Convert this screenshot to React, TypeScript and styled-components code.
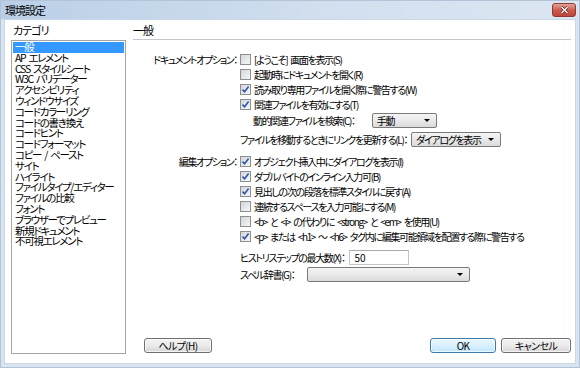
import React from 'react';
import styled, { createGlobalStyle } from 'styled-components';

const GlobalStyle = createGlobalStyle`
  html, body {
    margin: 0;
    padding: 0;
    background: #fff;
  }
  body {
    font-family: "Noto Sans CJK JP", "Liberation Sans", sans-serif;
    font-size: 10px;
    font-feature-settings: "palt";
    letter-spacing: -1.35px;
    word-spacing: 2px;
    color: #000;
  }
`;

const Window = styled.div`
  width: 580px;
  height: 368px;
  box-sizing: border-box;
  display: flex;
  flex-direction: column;
  background: #d9e4f1;
  border: 1px solid #b4c4d8;
`;

const TitleBar = styled.div`
  height: 18px;
  display: flex;
  align-items: center;
  padding: 0 3px 0 4px;
  background: linear-gradient(to right, #bacfe7, #d3e0ef 60%, #dce6f2);
`;

const Title = styled.span`
  font-size: 11px;
  letter-spacing: -1px;
`;

const CloseButton = styled.div`
  margin-left: auto;
  width: 22px;
  height: 12px;
  border: 1px solid #8c3a32;
  border-radius: 3px;
  background: linear-gradient(#e3a49b, #cd5b4d 50%, #c0443a);
  display: flex;
  align-items: center;
  justify-content: center;
`;

const Body = styled.div`
  flex: 1;
  margin: 0 3px 3px;
  background: #fff;
  border: 1px solid #cbd7e6;
  display: flex;
  gap: 7px;
  padding: 0 4px 9px 6px;
`;

const Sidebar = styled.div`
  width: 115px;
  display: flex;
  flex-direction: column;
`;

const SectionLabel = styled.div`
  height: 20px;
  line-height: 20px;
  padding-left: 2px;
  font-size: 11px;
  letter-spacing: -1px;
`;

const CategoryList = styled.ul`
  flex: 1;
  margin: 0;
  padding: 1px;
  list-style: none;
  border: 1px solid #a5a5a5;
  overflow: hidden;
`;

const CategoryItem = styled.li<{ $selected?: boolean }>`
  height: 10.8px;
  line-height: 10.8px;
  padding-left: 2px;
  font-size: 10.5px;
  letter-spacing: -1.3px;
  white-space: nowrap;
  background: ${p => (p.$selected ? '#3399ff' : 'transparent')};
  color: ${p => (p.$selected ? '#fff' : '#000')};
`;

const Main = styled.div`
  flex: 1;
  display: flex;
  flex-direction: column;
`;

const PanelHeader = styled.div`
  height: 19px;
  line-height: 20px;
  font-size: 11px;
  letter-spacing: -1px;
  border-bottom: 1px solid #c5c9cd;
`;

const Content = styled.div`
  flex: 1;
  padding-top: 12px;
  display: flex;
  flex-direction: column;
`;

const OptionGroup = styled.div<{ $top?: number }>`
  display: grid;
  grid-template-columns: 107px 1fr;
  margin-top: ${p => p.$top ?? 0}px;
`;

const GroupLabel = styled.div`
  height: 15px;
  line-height: 15px;
  text-align: right;
  padding-right: 3px;
  white-space: nowrap;
`;

const GroupBody = styled.div`
  display: flex;
  flex-direction: column;
`;

const CheckRow = styled.label`
  height: 15px;
  display: flex;
  align-items: center;
  gap: 3px;
  white-space: nowrap;
`;

const Box = styled.span`
  width: 9px;
  height: 9px;
  flex: none;
  border: 1px solid #8f8f8f;
  background: linear-gradient(135deg, #d2d5da, #f7f7f7);
  display: flex;
  align-items: center;
  justify-content: center;
`;

const FieldRow = styled.div<{ $indent: number; $top?: number; $height?: number; $gap?: number }>`
  display: flex;
  align-items: center;
  gap: ${p => p.$gap ?? 4}px;
  height: ${p => p.$height ?? 15}px;
  margin-left: ${p => p.$indent}px;
  margin-top: ${p => p.$top ?? 0}px;
  white-space: nowrap;
`;

const SelectBox = styled.div<{ $width: number }>`
  width: ${p => p.$width}px;
  height: 15px;
  box-sizing: border-box;
  border: 1px solid #7a7a7a;
  border-radius: 2px;
  background: linear-gradient(#f4f4f4, #e9e9e9 50%, #dadada);
  display: flex;
  align-items: center;
  padding: 0 6px 0 4px;
`;

const SelectText = styled.span`
  flex: 1;
`;

const Arrow = styled.span`
  width: 0;
  height: 0;
  border-left: 3px solid transparent;
  border-right: 3px solid transparent;
  border-top: 3px solid #000;
`;

const TextInput = styled.div`
  width: 60px;
  height: 15px;
  box-sizing: border-box;
  border: 1px solid #c2c5ca;
  border-top-color: #a6a9ae;
  line-height: 13px;
  padding-left: 5px;
  letter-spacing: 0;
`;

const Footer = styled.div`
  display: flex;
  align-items: center;
  gap: 5px;
  padding-left: 11px;
  margin-bottom: 1px;
`;

const Button = styled.div<{ $width: number; $default?: boolean }>`
  width: ${p => p.$width}px;
  height: 15px;
  box-sizing: border-box;
  border: 1px solid ${p => (p.$default ? '#3d7bad' : '#707070')};
  border-radius: 3px;
  background: ${p =>
    p.$default
      ? 'linear-gradient(#eaf6fd, #d9f0fc 50%, #bee6fd)'
      : 'linear-gradient(#f2f2f2, #ebebeb 50%, #d6d6d6)'};
  box-shadow: inset 0 0 0 1px rgba(255, 255, 255, 0.7);
  display: flex;
  align-items: center;
  justify-content: center;
  letter-spacing: -0.6px;
`;

const Spacer = styled.div`
  flex: 1;
`;

const categories = [
  '一般',
  'AP エレメント',
  'CSS スタイルシート',
  'W3C バリデーター',
  'アクセシビリティ',
  'ウィンドウサイズ',
  'コードカラーリング',
  'コードの書き換え',
  'コードヒント',
  'コードフォーマット',
  'コピー / ペースト',
  'サイト',
  'ハイライト',
  'ファイルタイプ/エディター',
  'ファイルの比較',
  'フォント',
  'ブラウザーでプレビュー',
  '新規ドキュメント',
  '不可視エレメント',
];

const Check: React.FC<{ checked?: boolean; children: React.ReactNode }> = ({ checked = false, children }) => (
  <CheckRow>
    <Box>
      {checked && (
        <svg width="9" height="9" viewBox="0 0 9 9">
          <path d="M1.5 4.6 L3.6 6.8 L7.6 1.6" fill="none" stroke="#2d56a8" strokeWidth="1.6" />
        </svg>
      )}
    </Box>
    <span>{children}</span>
  </CheckRow>
);

const Select: React.FC<{ width: number; value?: string }> = ({ width, value }) => (
  <SelectBox $width={width}>
    <SelectText>{value}</SelectText>
    <Arrow />
  </SelectBox>
);

export default function App() {
  return (
    <>
      <GlobalStyle />
      <Window>
        <TitleBar>
          <Title>環境設定</Title>
          <CloseButton>
            <svg width="9" height="8" viewBox="0 0 9 8">
              <path d="M1.5 1 L7.5 7 M7.5 1 L1.5 7" stroke="#5a1d18" strokeWidth="2.6" />
              <path d="M1.5 1 L7.5 7 M7.5 1 L1.5 7" stroke="#fff" strokeWidth="1.4" />
            </svg>
          </CloseButton>
        </TitleBar>
        <Body>
          <Sidebar>
            <SectionLabel>カテゴリ</SectionLabel>
            <CategoryList>
              {categories.map((c, i) => (
                <CategoryItem key={c} $selected={i === 0}>
                  {c}
                </CategoryItem>
              ))}
            </CategoryList>
          </Sidebar>
          <Main>
            <PanelHeader>一般</PanelHeader>
            <Content>
              <OptionGroup>
                <GroupLabel>ドキュメントオプション：</GroupLabel>
                <GroupBody>
                  <Check>[ようこそ] 画面を表示(S)</Check>
                  <Check>起動時にドキュメントを開く(R)</Check>
                  <Check checked>読み取り専用ファイルを開く際に警告する(W)</Check>
                  <Check checked>関連ファイルを有効にする(T)</Check>
                  <FieldRow $indent={13} $height={16} $gap={17}>
                    動的関連ファイルを検索(C)：
                    <Select width={65} value="手動" />
                  </FieldRow>
                </GroupBody>
              </OptionGroup>
              <FieldRow $indent={107} $top={4}>
                ファイルを移動するときにリンクを更新する(L)：
                <Select width={90} value="ダイアログを表示" />
              </FieldRow>
              <OptionGroup $top={7}>
                <GroupLabel>編集オプション：</GroupLabel>
                <GroupBody>
                  <Check checked>オブジェクト挿入中にダイアログを表示(I)</Check>
                  <Check checked>ダブルバイトのインライン入力可(B)</Check>
                  <Check checked>見出しの次の段落を標準スタイルに戻す(A)</Check>
                  <Check>連続するスペースを入力可能にする(M)</Check>
                  <Check>{'<b> と <i> の代わりに <strong> と <em> を使用(U)'}</Check>
                  <Check checked>{'<p> または <h1> ～ <h6> タグ内に編集可能領域を配置する際に警告する'}</Check>
                </GroupBody>
              </OptionGroup>
              <FieldRow $indent={107} $top={6}>
                ヒストリステップの最大数(X)：
                <TextInput>50</TextInput>
              </FieldRow>
              <FieldRow $indent={107} $top={2} $gap={13}>
                スペル辞書(G)：
                <Select width={163} />
              </FieldRow>
              <Spacer />
              <Footer>
                <Button $width={68}>ヘルプ(H)</Button>
                <Spacer />
                <Button $width={66} $default>
                  OK
                </Button>
                <Button $width={70}>キャンセル</Button>
              </Footer>
            </Content>
          </Main>
        </Body>
      </Window>
    </>
  );
}
